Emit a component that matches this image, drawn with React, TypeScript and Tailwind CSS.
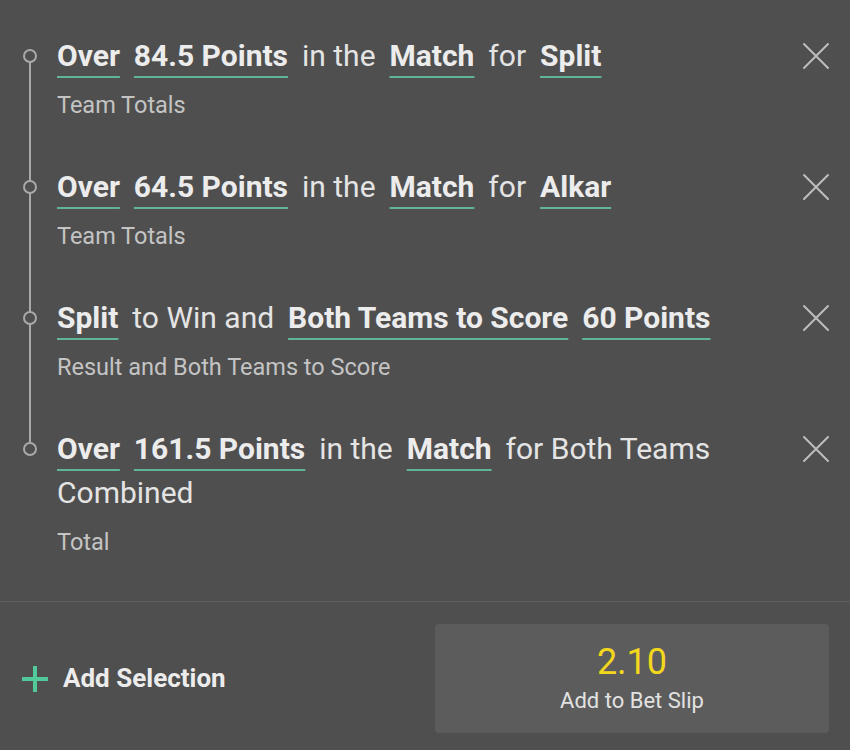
type Token = { text: string; bold?: boolean };

interface Leg {
  tokens: Token[];
  market: string;
}

const legs: Leg[] = [
  {
    tokens: [
      { text: "Over", bold: true },
      { text: "84.5 Points", bold: true },
      { text: "in the" },
      { text: "Match", bold: true },
      { text: "for" },
      { text: "Split", bold: true },
    ],
    market: "Team Totals",
  },
  {
    tokens: [
      { text: "Over", bold: true },
      { text: "64.5 Points", bold: true },
      { text: "in the" },
      { text: "Match", bold: true },
      { text: "for" },
      { text: "Alkar", bold: true },
    ],
    market: "Team Totals",
  },
  {
    tokens: [
      { text: "Split", bold: true },
      { text: "to Win and" },
      { text: "Both Teams to Score", bold: true },
      { text: "60 Points", bold: true },
    ],
    market: "Result and Both Teams to Score",
  },
  {
    tokens: [
      { text: "Over", bold: true },
      { text: "161.5 Points", bold: true },
      { text: "in the" },
      { text: "Match", bold: true },
      { text: "for Both Teams Combined" },
    ],
    market: "Total",
  },
];

function CloseIcon() {
  return (
    <svg width="28" height="28" viewBox="0 0 28 28" fill="none">
      <path
        d="M2 2L26 26M26 2L2 26"
        stroke="#bdbdbd"
        strokeWidth="2"
        strokeLinecap="round"
      />
    </svg>
  );
}

function LegRow({ leg, last }: { leg: Leg; last: boolean }) {
  return (
    <div className={`relative flex pl-[57px] pr-[20px] ${last ? "pb-[44px]" : "pb-[45px]"}`}>
      {/* timeline rail to next leg's dot */}
      {!last && (
        <div className="absolute left-[29px] top-[22px] bottom-[-22px] w-[2px] bg-[#a9a9a9]" />
      )}
      <div className="absolute left-[23px] top-[15px] h-[14px] w-[14px] rounded-full border-2 border-[#a9a9a9] bg-[#4f4f4f]" />
      <div className="flex-1 min-w-0 pr-[40px]">
        <div className="text-[30px] leading-[44px] text-[#e4e4e4]">
          {leg.tokens.map((t, i) => (
            <span key={i}>
              {i > 0 && " "}
              <span className={i > 0 ? "ml-[6.5px]" : ""}>
                {t.bold ? (
                  <span className="font-bold text-[#ececec] underline decoration-[#5fb594] decoration-2 underline-offset-[10px]">
                    {t.text}
                  </span>
                ) : (
                  t.text
                )}
              </span>
            </span>
          ))}
        </div>
        <div className="mt-[12px] text-[23.5px] leading-[30px] text-[#c4c4c4]">
          {leg.market}
        </div>
      </div>
      <button type="button" className="mt-[8px] h-[28px] w-[28px] shrink-0">
        <CloseIcon />
      </button>
    </div>
  );
}

export default function App() {
  return (
    <div
      className="h-[750px] w-full bg-[#4f4f4f] overflow-hidden"
      style={{ fontFamily: "Roboto, 'Liberation Sans', sans-serif" }}
    >
      <div className="pt-[34px]">
        {legs.map((leg, i) => (
          <LegRow key={i} leg={leg} last={i === legs.length - 1} />
        ))}
      </div>
      <div className="flex items-start border-t border-[#5f5f5f] pl-[22px] pr-[21px] pt-[22px]">
        <button type="button" className="flex h-[109px] flex-1 items-center gap-[15px]">
          <svg width="26" height="26" viewBox="0 0 26 26">
            <path d="M13 0V26M0 13H26" stroke="#52c99a" strokeWidth="4" />
          </svg>
          <span className="text-[26px] font-bold text-[#ececec]">Add Selection</span>
        </button>
        <button
          type="button"
          className="flex h-[109px] w-[394px] flex-col items-center justify-center rounded-[4px] bg-[#5c5c5c]"
        >
          <span className="text-[36px] leading-[40px] text-[#f3d71c]">2.10</span>
          <span className="mt-[5px] text-[22px] leading-[28px] text-[#e2e2e2]">
            Add to Bet Slip
          </span>
        </button>
      </div>
    </div>
  );
}
